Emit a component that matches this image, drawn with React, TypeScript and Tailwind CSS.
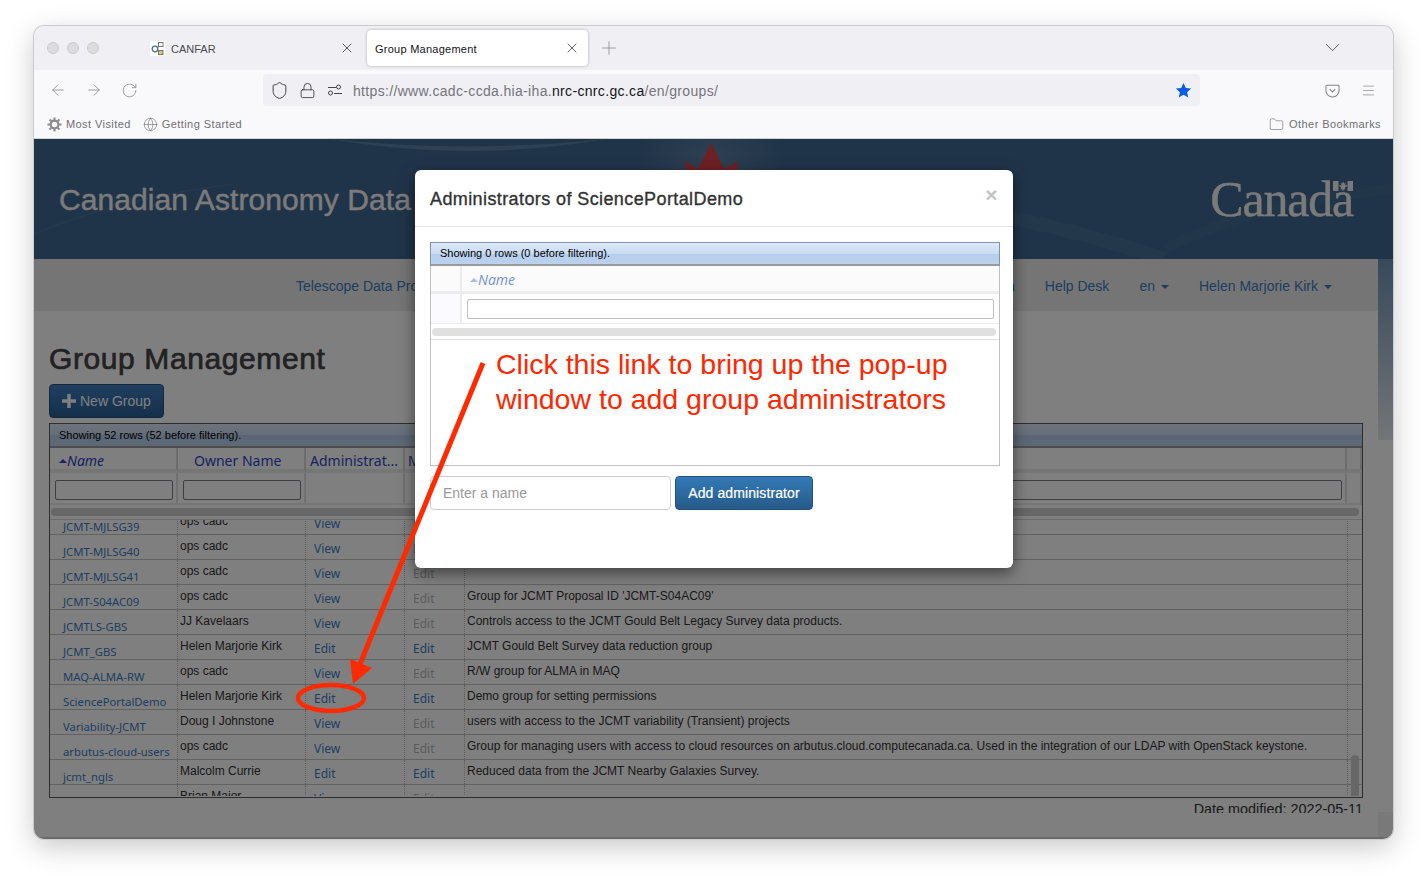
import React from "react";
import { ArrowLeft, ArrowRight, RotateCw, Shield, Lock, X, Plus, ChevronDown, Menu, Globe, Folder } from "lucide-react";

const rows = [
  ["JCMT-MJLSG39", "ops cadc", "View", "Edit", "", false, false],
  ["JCMT-MJLSG40", "ops cadc", "View", "Edit", "", false, false],
  ["JCMT-MJLSG41", "ops cadc", "View", "Edit", "", false, false],
  ["JCMT-S04AC09", "ops cadc", "View", "Edit", "Group for JCMT Proposal ID 'JCMT-S04AC09'", false, false],
  ["JCMTLS-GBS", "JJ Kavelaars", "View", "Edit", "Controls access to the JCMT Gould Belt Legacy Survey data products.", false, false],
  ["JCMT_GBS", "Helen Marjorie Kirk", "Edit", "Edit", "JCMT Gould Belt Survey data reduction group", true, true],
  ["MAQ-ALMA-RW", "ops cadc", "View", "Edit", "R/W group for ALMA in MAQ", false, false],
  ["SciencePortalDemo", "Helen Marjorie Kirk", "Edit", "Edit", "Demo group for setting permissions", true, true],
  ["Variability-JCMT", "Doug I Johnstone", "View", "Edit", "users with access to the JCMT variability (Transient) projects", false, false],
  ["arbutus-cloud-users", "ops cadc", "View", "Edit", "Group for managing users with access to cloud resources on arbutus.cloud.computecanada.ca. Used in the integration of our LDAP with OpenStack keystone.", false, false],
  ["jcmt_ngls", "Malcolm Currie", "Edit", "Edit", "Reduced data from the JCMT Nearby Galaxies Survey.", true, true],
  ["", "Brian Major", "View", "Edit", "", false, false],
] as const;

const cols = "grid grid-cols-[128px_128px_99px_60px_882px_15px]";
const cap = "h-[24px] border-b-2 border-b-[#9a9a9a] border-[#7f93b5] pl-[9px] text-[11px] text-black bg-[linear-gradient(#dce8f6_0%,#c9dcf2_50%,#b5cdec_50%,#bcd2ee_100%)]";

function Caret() {
  return <span className="ml-[6px] inline-block h-0 w-0 border-x-[4px] border-t-[4px] border-x-transparent border-t-current align-middle" />;
}
function Sort({ color }: { color: string }) {
  return <span className={`mb-[3px] inline-block h-0 w-0 border-x-[4px] border-b-[4px] border-x-transparent ${color}`} />;
}

function BookmarkItem({ icon, label, gap }: { icon: React.ReactNode; label: string; gap: string }) {
  return (
    <div className={`flex items-center text-[11px] tracking-[0.42px] text-[#6f6f73] ${gap}`}>
      {icon}
      <span>{label}</span>
    </div>
  );
}

function Gear() {
  return (
    <svg width="15" height="15" viewBox="0 0 15 15" fill="none" stroke="#8a8a8f">
      <circle cx="7.500" cy="7.500" r="3.800" strokeWidth="2.200" />
      <path d="M7.500 .5v2.500M7.500 12v2.500M.5 7.500H3M12 7.500h2.500M2.500 2.500l1.800 1.800M10.700 10.700l1.800 1.800M2.500 12.500l1.800-1.800M10.700 4.300l1.800-1.800" strokeWidth="2" />
    </svg>
  );
}

function Browser() {
  return (
    <>
      <div className="flex h-[44px] shrink-0 items-start bg-[#f0f0f4]">
        <div className="flex h-[44px] w-[111px] items-center gap-[8px] pl-[13px]">
          <span className="h-[12px] w-[12px] rounded-full border border-[#c9c9cb] bg-[#dcdcde]" />
          <span className="h-[12px] w-[12px] rounded-full border border-[#c9c9cb] bg-[#dcdcde]" />
          <span className="h-[12px] w-[12px] rounded-full border border-[#c9c9cb] bg-[#dcdcde]" />
        </div>
        <div className="flex h-[44px] w-[222px] items-center pl-[5px] pr-[12px] text-[11px] text-[#4a4a4f]">
          <svg width="15" height="15" viewBox="0 0 15 15" className="mr-[6px] shrink-0">
            <rect width="15" height="15" fill="#fff" />
            <circle cx="5" cy="8" r="2.800" fill="none" stroke="#4a6fa5" strokeWidth="1.300" />
            <rect x="8.500" y="1.500" width="4.500" height="4" fill="none" stroke="#777" strokeWidth="1" />
            <rect x="8.500" y="9.500" width="4.500" height="4" fill="#e3c46a" stroke="#777" strokeWidth="1" />
            <path d="M7.500 7 9 5M7.500 9 9 10.500" stroke="#777" strokeWidth="1" />
          </svg>
          <span className="flex-1 pt-[2px]">CANFAR</span>
          <X size={16} strokeWidth={1.1} className="text-[#222]" />
        </div>
        <div className="mt-[4px] flex h-[36px] w-[221px] items-center rounded-[4px] bg-white pl-[8px] pr-[8px] text-[11px] text-[#15141a] shadow-[0_0_3px_rgba(0,0,0,0.3)]">
          <span className="flex-1 pt-[2px] tracking-[0.25px]">Group Management</span>
          <X size={16} strokeWidth={1.1} className="text-[#222]" />
        </div>
        <div className="ml-[10px] flex h-[44px] items-center">
          <Plus size={22} strokeWidth={0.9} className="text-[#8d8d92]" />
        </div>
        <div className="flex h-[44px] flex-1 items-center justify-end pb-[2px] pr-[48px]">
          <ChevronDown size={25} strokeWidth={0.9} className="text-[#55555a]" />
        </div>
      </div>
      <div className="flex h-[40px] shrink-0 items-center bg-[#f9f9fb] text-[#8a8a8f]">
        <div className="flex w-[229px] items-center gap-[18px] pl-[15px]">
          <ArrowLeft size={18} strokeWidth={1.1} />
          <ArrowRight size={18} strokeWidth={1.1} />
          <RotateCw size={17} strokeWidth={1.1} />
        </div>
        <div className="flex h-[32px] w-[937px] items-center rounded-[4px] bg-[#f0f0f4] pl-[7px] pr-[8px] text-[#3a3a3f]">
          <Shield size={19} strokeWidth={1.2} />
          <Lock size={17} strokeWidth={1.2} className="ml-[10px]" />
          <svg width="16" height="12" viewBox="0 0 16 12" className="ml-[11px]" fill="none" stroke="#444" strokeWidth="1">
            <circle cx="11.500" cy="3" r="2" />
            <path d="M1 3.500h8M7 9.500h8" />
            <circle cx="3.500" cy="9" r="2" />
          </svg>
          <span className="ml-[10px] flex-1 pt-[2px] text-[14px] tracking-[0.33px] text-[#74747a]">
            https://www.cadc-ccda.hia-iha.<span className="text-[#15141a]">nrc-cnrc.gc.ca</span>/en/groups/
          </span>
          <svg width="17" height="17" viewBox="0 0 24 24" fill="#0a5ce0">
            <path d="M12 1.500l3.200 7 7.600.8-5.700 5.100 1.600 7.600L12 18.100 5.300 22l1.600-7.600L1.200 9.300l7.600-.8z" />
          </svg>
        </div>
        <div className="flex flex-1 items-center justify-end gap-[21px] pr-[17px] text-[#85858a]">
          <svg width="15" height="15" viewBox="0 0 16 16" fill="none" stroke="currentColor" strokeWidth="1.100">
            <path d="M2 2.500h12a1 1 0 0 1 1 1V8a7 7 0 0 1-14 0V3.500a1 1 0 0 1 1-1z" />
            <path d="M5 6.500l3 3 3-3" />
          </svg>
          <Menu size={15} strokeWidth={1.1} />
        </div>
      </div>
      <div className="flex h-[29px] shrink-0 items-center justify-between border-b border-[#cfcfd3] bg-[#f9f9fb] pl-[13px] pr-[12px]">
        <div className="flex items-center gap-[12px]">
          <BookmarkItem gap="gap-[4px]" icon={<Gear />} label="Most Visited" />
          <BookmarkItem gap="gap-[4px]" icon={<Globe size={15} strokeWidth={1} className="text-[#6f6f73]" />} label="Getting Started" />
        </div>
        <BookmarkItem gap="gap-[5px]" icon={<Folder size={15} strokeWidth={1} className="text-[#6f6f73]" />} label="Other Bookmarks" />
      </div>
    </>
  );
}

function SiteHeader() {
  return (
    <div className="relative flex h-[120px] shrink-0 items-center justify-between overflow-hidden bg-[#406892] pl-[25px] pr-[40px]">
      <svg className="absolute left-0 top-0" width="1359" height="120" viewBox="0 0 1359 120" fill="none">
        <defs>
          <radialGradient id="glow">
            <stop offset="0" stopColor="#fff" stopOpacity="0.16" />
            <stop offset="1" stopColor="#fff" stopOpacity="0" />
          </radialGradient>
        </defs>
        <circle cx="677" cy="25" r="75" fill="url(#glow)" />
        <path d="M296 0Q434 24 572 0z" fill="#6f96b8" opacity="0.6" />
        <path d="M296 0Q434 15 572 0z" fill="#406892" />
        <path d="M677 4 690 30 704 22 700 50H654L651 22 664 30z" fill="#dc4048" />
        <path d="M920 70c80 10 150 30 210 50" stroke="#5f86aa" strokeWidth="14" opacity="0.25" />
        <path d="M0 95C60 70 120 55 200 45" stroke="#5f86aa" strokeWidth="1" opacity="0.4" />
        <path d="M1130 110c60-30 130-50 229-60" stroke="#5f86aa" strokeWidth="10" opacity="0.16" />
      </svg>
      <div className="relative whitespace-nowrap text-[30px] tracking-[0.08px] text-[#f6f6f6] [-webkit-text-stroke:0.4px_#f6f6f6]">Canadian Astronomy Data Centre</div>
      <div className="relative font-['Liberation_Serif',serif] text-[50px] leading-none tracking-[-1.2px] text-[#f4f4f4] [-webkit-text-stroke:0.4px_#f4f4f4]">
        Canada
        <svg width="20" height="10" viewBox="0 0 20 10" fill="#f4f4f4" className="absolute right-0 top-[7px]">
          <rect x="0" width="5.500" height="10" />
          <rect x="14.500" width="5.500" height="10" />
          <path d="M10 .5l1.200 2 1.400-.6-.5 2.800 1.700-1 .5 1.300L12 6.500l.3 2h-1.800V10h-1V8.500H7.700l.3-2-1.800-1.500.5-1.300 1.700 1-.5-2.800 1.400.6z" />
        </svg>
      </div>
    </div>
  );
}

function Nav() {
  return (
    <div className="flex h-[52px] shrink-0 items-center whitespace-nowrap bg-[#ebebeb] pl-[262px] pr-[46px] pt-[2px] text-[14px] text-[#3b7bbf]">
      <span>Telescope Data Products</span>
      <span className="ml-auto">Documentation</span>
      <span className="ml-[30px]">Help Desk</span>
      <span className="ml-[30px]">en<Caret /></span>
      <span className="ml-[30px]">Helen Marjorie Kirk<Caret /></span>
    </div>
  );
}

function Filter({ full }: { full?: boolean }) {
  return <div className={`h-[20px] rounded-[2px] border border-[#7c7c86] bg-white ${full ? "w-full" : "w-[118px]"}`} />;
}

function GroupTable() {
  const th = "h-[25px] border-r-2 border-r-[#d8d8d8] border-b-4 border-b-[#ececec] text-[14px] leading-[26px] font-['Noto_Sans',sans-serif] text-[#2c46c4] whitespace-nowrap";
  const fc = "h-[32px] border-r-2 border-r-[#e2e2e2] border-b-2 border-b-[#ececec] pt-[7px]";
  const link = "text-[#3a7cc2]";
  return (
    <div className="h-[375px] w-[1314px] border border-[#5c5c5c]">
      <div className={`${cap} leading-[22px]`}>Showing 52 rows (52 before filtering).</div>
      <div className={cols}>
        <div className={`${th} pl-[9px] italic`}><Sort color="border-b-[#2c46c4]" />Name</div>
        <div className={`${th} pl-[16px]`}>Owner Name</div>
        <div className={`${th} pl-[4px]`}>Administrat...</div>
        <div className={`${th} pl-[3px]`}>Membership</div>
        <div className={`${th} pl-[3px]`}>Description</div>
        <div className={th} />
      </div>
      <div className={cols}>
        <div className={`${fc} pl-[5px]`}><Filter /></div>
        <div className={`${fc} pl-[5px]`}><Filter /></div>
        <div className={fc} />
        <div className={fc} />
        <div className={`${fc} pl-[3px] pr-[3px]`}><Filter full /></div>
        <div className={fc} />
      </div>
      <div className="h-[15px] border-b border-[#d8d8d8] px-[1px] pt-[3px]">
        <div className="h-[8px] w-[1308px] rounded-[4px] bg-[#cfcfcf]" />
      </div>
      <div className="relative h-[276px] overflow-hidden">
        <div className="-mt-[10px]">
          {rows.map((r) => (
            <div key={r[1] + r[0]} className={`${cols} h-[25px] border-b border-[#c4c4c4] text-[12px]`}>
              <div className={`overflow-hidden whitespace-nowrap pl-[13px] pt-[10px] font-['Noto_Sans',sans-serif] text-[11.3px] leading-[14px] ${link}`}>{r[0]}</div>
              <div className="-ml-[1px] border-l border-dotted border-[#bbbbbb] pl-[2px] pt-[2px] text-[#333]">{r[1]}</div>
              <div className={`-ml-[1px] border-l border-dotted border-[#bbbbbb] pl-[8px] pt-[6px] font-['Noto_Sans',sans-serif] leading-[16px] ${link}`}>{r[2]}</div>
              <div className={`-ml-[1px] border-l border-dotted border-[#bbbbbb] pl-[8px] pt-[6px] font-['Noto_Sans',sans-serif] leading-[16px] ${r[6] ? link : "text-[#b8b8b8]"}`}>{r[3]}</div>
              <div className="-ml-[1px] whitespace-nowrap border-l border-dotted border-[#bbbbbb] pl-[2px] pt-[2px] text-[#333]">{r[4]}</div>
              <div className="border-l border-dotted border-[#bbbbbb]" />
            </div>
          ))}
        </div>
        <div className="absolute bottom-0 right-[3px] h-[41px] w-[8px] rounded-t-[4px] bg-[#cfcfcf]" />
      </div>
    </div>
  );
}

function Main() {
  return (
    <div className="min-h-0 flex-1 overflow-hidden bg-white pl-[15px] pt-[31px]">
      <h1 className="text-[30px] font-normal leading-[34px] tracking-[0.6px] text-[#444] [-webkit-text-stroke:0.7px_#444]">Group Management</h1>
      <div className="mt-[8px] flex h-[34px] w-[115px] items-center rounded-[4px] border border-[#24527e] bg-[linear-gradient(#3f7fbf,#2a5f95)] pl-[12px] text-[14px] text-white">
        <svg width="14" height="14" viewBox="0 0 14 14" fill="#fff" className="mr-[4px]"><path d="M5.300 0h3.400v5.300H14v3.400H8.700V14H5.300V8.700H0V5.300h5.300z" /></svg>
        New Group
      </div>
      <div className="mt-[5px]"><GroupTable /></div>
      <div className="h-[15px] w-[1314px] overflow-hidden pt-[1px] text-right text-[14.4px] leading-[20px] text-[#333]">Date modified: 2022-05-11</div>
    </div>
  );
}

function Modal() {
  return (
    <div className="absolute left-[381px] top-[31px] h-[398px] w-[598px] rounded-[6px] bg-white shadow-[0_5px_15px_rgba(0,0,0,0.5)]">
      <div className="relative h-[57px] border-b border-[#e5e5e5] pl-[15px] pt-[15px] text-[18px] leading-[28px] tracking-[0.4px] text-[#333] [-webkit-text-stroke:0.35px_#333]">
        Administrators of SciencePortalDemo
        <span className="absolute right-[15px] top-[13px] text-[21px] font-bold leading-[24px] text-[#c4c4c4] [-webkit-text-stroke:0]">×</span>
      </div>
      <div className="px-[15px] pt-[15px]">
        <div className="h-[224px] w-[570px] border border-[#c0c0c0]">
          <div className={`${cap} -mx-[1px] -mt-[1px] border-x border-t leading-[20px]`}>Showing 0 rows (0 before filtering).</div>
          <div className="flex h-[28px] border-b-[3px] border-[#ececec] bg-[#fbfbfb]">
            <div className="w-[31px] border-r-2 border-[#ececec]" />
            <div className="pl-[8px] font-['Noto_Sans',sans-serif] text-[14px] italic leading-[27px] text-[#7b97d9]"><Sort color="border-b-[#a9bde8]" />Name</div>
          </div>
          <div className="flex h-[30px] border-b border-[#ececec] bg-[#fbfbff]">
            <div className="w-[31px] border-r-2 border-[#ececec]" />
            <div className="flex-1 bg-white px-[5px] pt-[5px]">
              <div className="h-[20px] rounded-[2px] border border-[#bdbdcb] bg-white" />
            </div>
          </div>
          <div className="h-[16px] border-b border-[#dedede] px-[1px] pt-[4px]">
            <div className="h-[8px] w-[564px] rounded-[4px] bg-[#e0e0e0]" />
          </div>
        </div>
        <div className="mt-[10px] flex gap-[4px]">
          <div className="flex h-[34px] w-[241px] items-center rounded-[4px] border border-[#cccccc] pl-[12px] text-[14px] text-[#999]">Enter a name</div>
          <div className="flex h-[34px] w-[138px] items-center justify-center rounded-[4px] border border-[#24527e] bg-[linear-gradient(#337ab7,#265a88)] text-[14px] tracking-[0.1px] text-white [-webkit-text-stroke:0.2px_#fff]">Add administrator</div>
        </div>
      </div>
    </div>
  );
}

export default function App() {
  return (
    <div className="relative h-[882px] w-[1427px] overflow-hidden bg-white pl-[34px] pt-[26px] font-['Liberation_Sans',Arial,sans-serif]">
      <div className="flex h-[813px] w-[1359px] flex-col overflow-hidden rounded-[10px] shadow-[0_0_0_1px_#cbcbcf,0_8px_28px_rgba(0,0,0,0.22)]">
        <Browser />
        <div className="relative flex min-h-0 flex-1 flex-col border-b-2 border-[#d4d4d4]">
          <SiteHeader />
          <div className="flex min-h-0 flex-1">
            <div className="flex w-[1344px] flex-col">
              <Nav />
              <Main />
            </div>
            <div className="flex w-[15px] flex-col">
              <div className="h-[181px] bg-[linear-gradient(#6f93b5,#e6ebef)]" />
              <div className="flex-1 bg-white" />
              <div className="h-[25px] bg-[#f2f2f2]" />
            </div>
          </div>
          <div className="absolute inset-x-0 top-0 -bottom-[2px] bg-black/50" />
          <Modal />
        </div>
      </div>
      <svg className="absolute left-0 top-0" width="1427" height="882" viewBox="0 0 1427 882" fill="none">
        <path d="M483 363 360 664" stroke="#ff2a00" strokeWidth="5" />
        <path d="M353 684 350 659 372 668z" fill="#ff2a00" />
        <ellipse cx="331" cy="698" rx="33" ry="13" stroke="#ff2a00" strokeWidth="4.500" />
      </svg>
      <div className="absolute left-[496px] top-[347px] whitespace-nowrap text-[28.5px] leading-[35px] text-[#ff2600]">
        Click this link to bring up the pop-up<br />window to add group administrators
      </div>
    </div>
  );
}
